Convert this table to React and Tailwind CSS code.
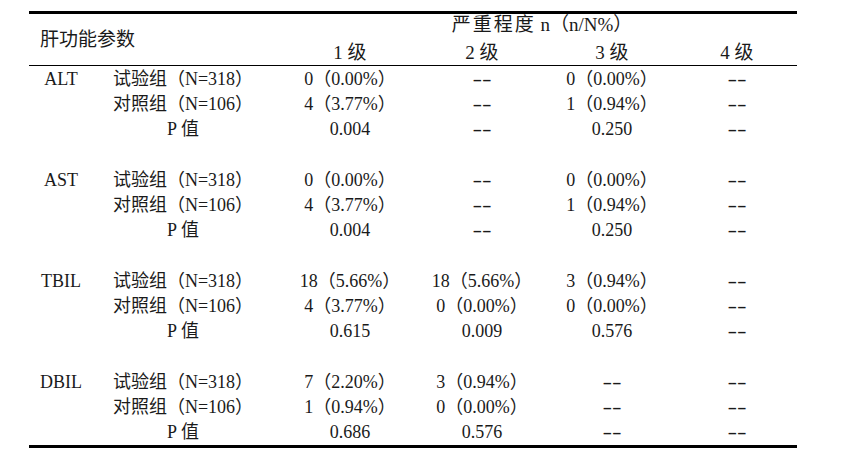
import React from "react";

const groups = [
  {
    name: "ALT",
    rows: [
      ["试验组（N=318）", "0（0.00%）", "--", "0（0.00%）", "--"],
      ["对照组（N=106）", "4（3.77%）", "--", "1（0.94%）", "--"],
      ["P 值", "0.004", "--", "0.250", "--"],
    ],
  },
  {
    name: "AST",
    rows: [
      ["试验组（N=318）", "0（0.00%）", "--", "0（0.00%）", "--"],
      ["对照组（N=106）", "4（3.77%）", "--", "1（0.94%）", "--"],
      ["P 值", "0.004", "--", "0.250", "--"],
    ],
  },
  {
    name: "TBIL",
    rows: [
      ["试验组（N=318）", "18（5.66%）", "18（5.66%）", "3（0.94%）", "--"],
      ["对照组（N=106）", "4（3.77%）", "0（0.00%）", "0（0.00%）", "--"],
      ["P 值", "0.615", "0.009", "0.576", "--"],
    ],
  },
  {
    name: "DBIL",
    rows: [
      ["试验组（N=318）", "7（2.20%）", "3（0.94%）", "--", "--"],
      ["对照组（N=106）", "1（0.94%）", "0（0.00%）", "--", "--"],
      ["P 值", "0.686", "0.576", "--", "--"],
    ],
  },
];

const cols = "grid grid-cols-[64px_180px_154px_110px_150px_110px]";

const Block = ({ group }) => {
  return (
    <div className="h-[101px]">
      {group.rows.map((row, i) => (
        <div key={i} className={`${cols} h-[25.25px] items-center`}>
          <div className="text-center">{i === 0 ? group.name : ""}</div>
          {row.map((cell, j) => (
            <div key={j} className={j === 4 ? "text-center pr-[10px]" : "text-center"}>
              {cell === "--" ? <span className="inline-block scale-x-[1.6]">{cell}</span> : cell}
            </div>
          ))}
        </div>
      ))}
    </div>
  );
};

const App = () => {
  return (
    <div className="w-[865px] h-[464px] bg-white text-[#1a1a1a] text-[18px] leading-[20px] font-['Liberation_Serif','Noto_Sans_CJK_SC',serif] pt-[11px] pl-[29px]">
      <div className="w-[768px]">
        <div className="border-t-[3px] border-black" />
        <div className="flex h-[51px] text-[19px]">
          <div className="w-[244px] flex items-center pl-[11px] pt-[1px]">肝功能参数</div>
          <div className="w-[524px] flex flex-col">
            <div className="h-[21px] flex items-center justify-center pl-[14px]">
              <span className="tracking-[2px]">严重程度</span>
              <span>&nbsp;n（n/N%）</span>
            </div>
            <div className="h-[30px] grid grid-cols-[154px_110px_150px_110px] items-center pt-[6px]">
              <div className="text-center">1 级</div>
              <div className="text-center">2 级</div>
              <div className="text-center">3 级</div>
              <div className="text-center pr-[10px]">4 级</div>
            </div>
          </div>
        </div>
        <div className="border-t border-black" />
        {groups.map((g) => (
          <Block key={g.name} group={g} />
        ))}
        <div className="-mt-[25px] border-t-[3px] border-black" />
      </div>
    </div>
  );
};

export default App;
